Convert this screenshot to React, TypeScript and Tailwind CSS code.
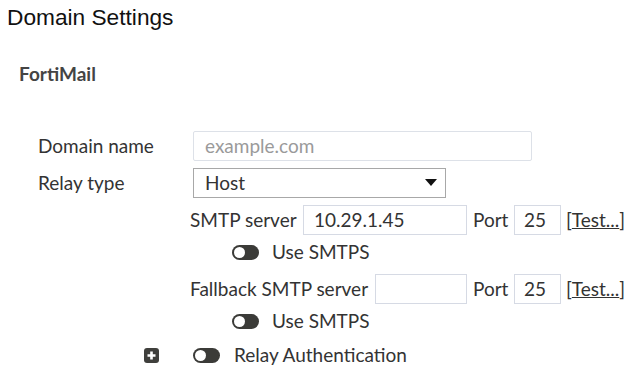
export default function App() {
  const toggle = (
    <span className="relative inline-block w-[27px] h-[15px] rounded-full bg-[#3b3b38]">
      <span className="absolute left-[2px] top-[2px] w-[11px] h-[11px] rounded-full bg-white" />
    </span>
  );

  return (
    <div className="w-[635px] h-[377px] bg-white text-[#333] font-['Lato','Open_Sans',sans-serif] text-[19px] overflow-hidden">
      <div className="pl-[7px] pt-[4px] h-[34px] font-['Liberation_Sans',Arial,sans-serif] text-[22.7px] leading-[26px] text-[#111]">
        Domain Settings
      </div>
      <div className="pl-[19px] pt-[28px] h-[80px] text-[19px] font-bold text-[#444] leading-[24px]">
        FortiMail
      </div>
      <div className="flex flex-col">
        <div className="flex items-center h-[30px] mt-[17px]">
          <span className="w-[193px] pl-[38px]">Domain name</span>
          <div className="w-[339px] h-[30px] border border-[#dde1e8] rounded-[2px] pl-[11px] flex items-center text-[#9a9a9a]">
            example.com
          </div>
        </div>
        <div className="flex items-center h-[30px] mt-[7px]">
          <span className="w-[193px] pl-[38px]">Relay type</span>
          <div className="w-[253px] h-[30px] border border-[#a8a8a8] pl-[11px] pr-[8px] flex items-center justify-between">
            <span>Host</span>
            <svg width="12" height="8" viewBox="0 0 12 8">
              <path d="M0 0 H12 L6 7 Z" fill="#111" />
            </svg>
          </div>
        </div>
        <div className="flex items-center h-[30px] mt-[7px] pl-[190px]">
          <span className="w-[113px]">SMTP server</span>
          <div className="w-[164px] h-[30px] border border-[#d6dae4] pl-[10px] flex items-center">
            10.29.1.45
          </div>
          <span className="w-[47px] pl-[6px]">Port</span>
          <div className="w-[47px] h-[30px] border border-[#d6dae4] pl-[9px] flex items-center">25</div>
          <span className="pl-[5px]">
            [<span className="underline">Test...</span>]
          </span>
        </div>
        <div className="flex items-center h-[34px] pl-[232px] gap-[13px]">
          {toggle}
          <span>Use SMTPS</span>
        </div>
        <div className="flex items-center h-[30px] mt-[5px] pl-[190px]">
          <span className="w-[185px] whitespace-nowrap">Fallback SMTP server</span>
          <div className="w-[92px] h-[30px] border border-[#d6dae4]" />
          <span className="w-[47px] pl-[6px]">Port</span>
          <div className="w-[47px] h-[30px] border border-[#d6dae4] pl-[9px] flex items-center">25</div>
          <span className="pl-[5px]">
            [<span className="underline">Test...</span>]
          </span>
        </div>
        <div className="flex items-center h-[34px] pl-[232px] gap-[13px]">
          {toggle}
          <span>Use SMTPS</span>
        </div>
        <div className="flex items-center h-[34px] pl-[144px]">
          <svg width="15" height="15" viewBox="0 0 15 15">
            <rect x="0" y="0" width="15" height="15" rx="3" fill="#3f3f3c" />
            <path d="M7.5 3.5 V11.5 M3.5 7.5 H11.5" stroke="#fff" strokeWidth="2.6" />
          </svg>
          <span className="ml-[34px] flex">{toggle}</span>
          <span className="ml-[14px]">Relay Authentication</span>
        </div>
      </div>
    </div>
  );
}
